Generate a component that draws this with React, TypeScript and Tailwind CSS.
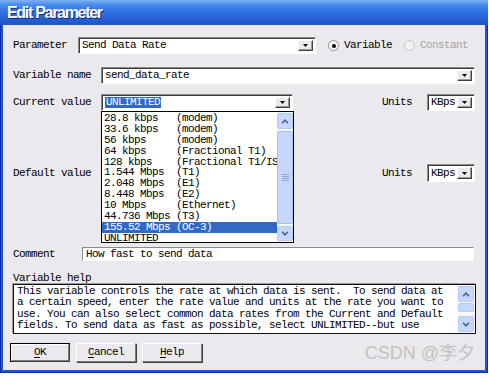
import type { ReactNode } from "react";

const rates: [string, string][] = [
  ["28.8 kbps", "(modem)"],
  ["33.6 kbps", "(modem)"],
  ["56 kbps", "(modem)"],
  ["64 kbps", "(Fractional T1)"],
  ["128 kbps", "(Fractional T1/ISDN)"],
  ["1.544 Mbps", "(T1)"],
  ["2.048 Mbps", "(E1)"],
  ["8.448 Mbps", "(E2)"],
  ["10 Mbps", "(Ethernet)"],
  ["44.736 Mbps", "(T3)"],
  ["155.52 Mbps", "(OC-3)"],
  ["UNLIMITED", ""],
];

const helpLines = [
  "This variable controls the rate at which data is sent.  To send data at",
  "a certain speed, enter the rate value and units at the rate you want to",
  "use. You can also select common data rates from the Current and Default",
  "fields. To send data as fast as possible, select UNLIMITED--but use",
];

function DropBtn() {
  return (
    <div className="w-[15px] my-[2px] mr-[2px] bg-[#ebe9ed] border border-t-white border-l-white border-b-[#404040] border-r-[#404040] shadow-[inset_-1px_-1px_0_#9a9a9a] flex items-center justify-center">
      <svg width="5" height="3" viewBox="0 0 5 3">
        <path d="M0 0h5L2.5 3z" fill="#000" />
      </svg>
    </div>
  );
}

function Combo({ className, children }: { className: string; children?: ReactNode }) {
  return (
    <div
      className={`flex bg-white border border-t-[#8a8a8a] border-l-[#8a8a8a] border-b-white border-r-white shadow-[inset_1px_1px_0_#3c3c3c] ${className}`}
    >
      <div className="flex-1 flex items-center pl-[3px] overflow-hidden whitespace-pre">{children}</div>
      <DropBtn />
    </div>
  );
}

function ScrollBtn({ up, className }: { up?: boolean; className: string }) {
  return (
    <div
      className={`rounded-[2px] border border-[#b7cbf5] bg-[#c7d7fc] flex items-center justify-center ${className}`}
    >
      <svg width="8" height="5" viewBox="0 0 8 5">
        <path
          d={up ? "M1 4.2L4 1.2L7 4.2" : "M1 0.8L4 3.8L7 0.8"}
          stroke="#4d6185"
          strokeWidth="1.6"
          fill="none"
        />
      </svg>
    </div>
  );
}

function Button({ label, under, isDefault }: { label: string; under: string; isDefault?: boolean }) {
  return (
    <div
      className={`w-[60px] h-[19px] flex items-center justify-center ${
        isDefault ? "border border-black" : ""
      }`}
    >
      <div className="w-full h-full flex items-center justify-center border border-t-white border-l-white border-b-[#7a7a7a] border-r-[#7a7a7a] shadow-[1px_1px_0_#404040]">
        <span>
          <span className="underline underline-offset-[2px]">{under}</span>
          {label}
        </span>
      </div>
    </div>
  );
}

export default function App() {
  return (
    <div className="w-[489px] h-[376px] bg-white font-['Liberation_Mono',monospace] text-[11px] tracking-[-0.6px] text-black">
      <div className="w-[488px] h-[373px] flex flex-col bg-[#1f55cc] shadow-[inset_1px_0_0_#0a2fa8,inset_-1px_0_0_#0a2fa8,inset_0_-1px_0_#0a2fa8]">
        {/* title bar */}
        <div className="h-[25px] flex items-center pl-[7px] bg-[linear-gradient(180deg,#7fb4f3_0%,#4b8ff0_18%,#2f73e2_45%,#2862d6_75%,#1f52c6_100%)]">
          <span className="font-['Liberation_Sans',sans-serif] font-bold text-[16px] tracking-[-1.3px] text-white [text-shadow:1px_1px_0_#0c2a80] mt-[1px]">
            Edit Parameter
          </span>
        </div>

        {/* body */}
        <div className="relative flex-1 mx-[3px] mb-[3px] bg-[#ebe9ed] flex flex-col pt-[12px]">
          {/* Parameter */}
          <div className="h-[17px] flex items-center pl-[10px]">
            <span className="w-[65px]">Parameter</span>
            <Combo className="w-[238px] h-[17px]">Send Data Rate</Combo>
            <div className="ml-[12px] w-[11px] h-[11px] rounded-full border border-[#8d8d8d] bg-white flex items-center justify-center">
              <div className="w-[4px] h-[4px] rounded-full bg-black" />
            </div>
            <span className="ml-[5px]">Variable</span>
            <div className="ml-[12px] w-[11px] h-[11px] rounded-full border border-[#c4c4c4] bg-[#f2f2f2]" />
            <span className="ml-[5px] text-[#a4a4a4]">Constant</span>
          </div>

          {/* Variable name */}
          <div className="h-[17px] mt-[13px] flex items-center pl-[10px]">
            <span className="w-[88px]">Variable name</span>
            <Combo className="w-[374px] h-[17px]">send_data_rate</Combo>
          </div>

          {/* Current value */}
          <div className="h-[17px] mt-[10px] flex items-center pl-[10px]">
            <span className="w-[88px]">Current value</span>
            <Combo className="w-[192px] h-[17px]">
              <span className="bg-[#316ac5] text-white px-[1px] leading-[11px]">UNLIMITED</span>
            </Combo>
            <span className="ml-[89px] w-[45px]">Units</span>
            <Combo className="w-[48px] h-[17px]">KBps</Combo>
          </div>

          {/* Default value (its combo sits under the open list) */}
          <div className="h-[18px] mt-[53px] flex items-center pl-[10px]">
            <span className="w-[88px]">Default value</span>
            <div className="w-[192px] h-[18px]" />
            <span className="ml-[89px] w-[45px]">Units</span>
            <Combo className="w-[48px] h-[18px]">KBps</Combo>
          </div>

          {/* Comment */}
          <div className="h-[14px] mt-[65px] flex items-center pl-[10px]">
            <span className="w-[69px]">Comment</span>
            <div className="w-[392px] h-[14px] bg-white border border-t-[#8a8a8a] border-l-[#8a8a8a] border-b-[#fafafa] border-r-[#fafafa] flex items-center pl-[3px] whitespace-pre">
              How fast to send data
            </div>
          </div>

          {/* Variable help */}
          <div className="h-[12px] mt-[11px] flex items-center pl-[10px]">Variable help</div>
          <div className="ml-[10px] w-[463px] h-[50px] bg-white border border-[#111] shadow-[-1px_-1px_0_#9a9a9a] flex">
            <div className="flex-1 pl-[3px] pt-[1px] overflow-hidden">
              {helpLines.map((l) => (
                <div key={l} className="h-[11.3px] leading-[11.3px] whitespace-pre">
                  {l}
                </div>
              ))}
            </div>
            <div className="w-[17px] bg-[#f6f6f2] flex flex-col py-[1px] pr-[1px]">
              <ScrollBtn up className="h-[16px]" />
              <div className="h-[9px] mt-[1px] rounded-[2px] border border-[#b7cbf5] bg-[#c7d7fc]" />
              <div className="flex-1" />
              <ScrollBtn className="h-[16px]" />
            </div>
          </div>

          {/* buttons */}
          <div className="mt-[9px] flex gap-[6px] pl-[7px]">
            <Button under="O" label="K" isDefault />
            <Button under="C" label="ancel" />
            <Button under="H" label="elp" />
          </div>

          {/* dropdown list */}
          <div className="absolute left-[98px] top-[86px] w-[193px] h-[132px] bg-white border border-black flex overflow-hidden">
            <div className="flex-1 pt-[1px] overflow-hidden">
              {rates.map(([a, b]) => (
                <div
                  key={a}
                  className={`h-[10.9px] leading-[10.9px] pl-[2px] whitespace-pre overflow-hidden ${
                    a === "155.52 Mbps" ? "bg-[#316ac5] text-white" : ""
                  }`}
                >
                  {a.padEnd(12) + b}
                </div>
              ))}
            </div>
            <div className="w-[16px] bg-[#f6f6f2] flex flex-col py-[1px]">
              <ScrollBtn up className="h-[16px]" />
              <div className="flex-1 my-[2px] rounded-[2px] border border-[#a9bff2] bg-[#c7d7fc] flex flex-col items-center justify-center gap-[1px]">
                <div className="w-[7px] h-[1px] bg-[#8da4dc]" />
                <div className="w-[7px] h-[1px] bg-[#8da4dc]" />
                <div className="w-[7px] h-[1px] bg-[#8da4dc]" />
                <div className="w-[7px] h-[1px] bg-[#8da4dc]" />
              </div>
              <ScrollBtn className="h-[15px]" />
            </div>
          </div>

          {/* watermark */}
          <div className="absolute right-[10px] bottom-[3px] font-['Liberation_Sans','Noto_Sans_CJK_SC',sans-serif] text-[18px] tracking-normal text-[#c2c2c2]">
            CSDN @李夕
          </div>
        </div>
      </div>
    </div>
  );
}
